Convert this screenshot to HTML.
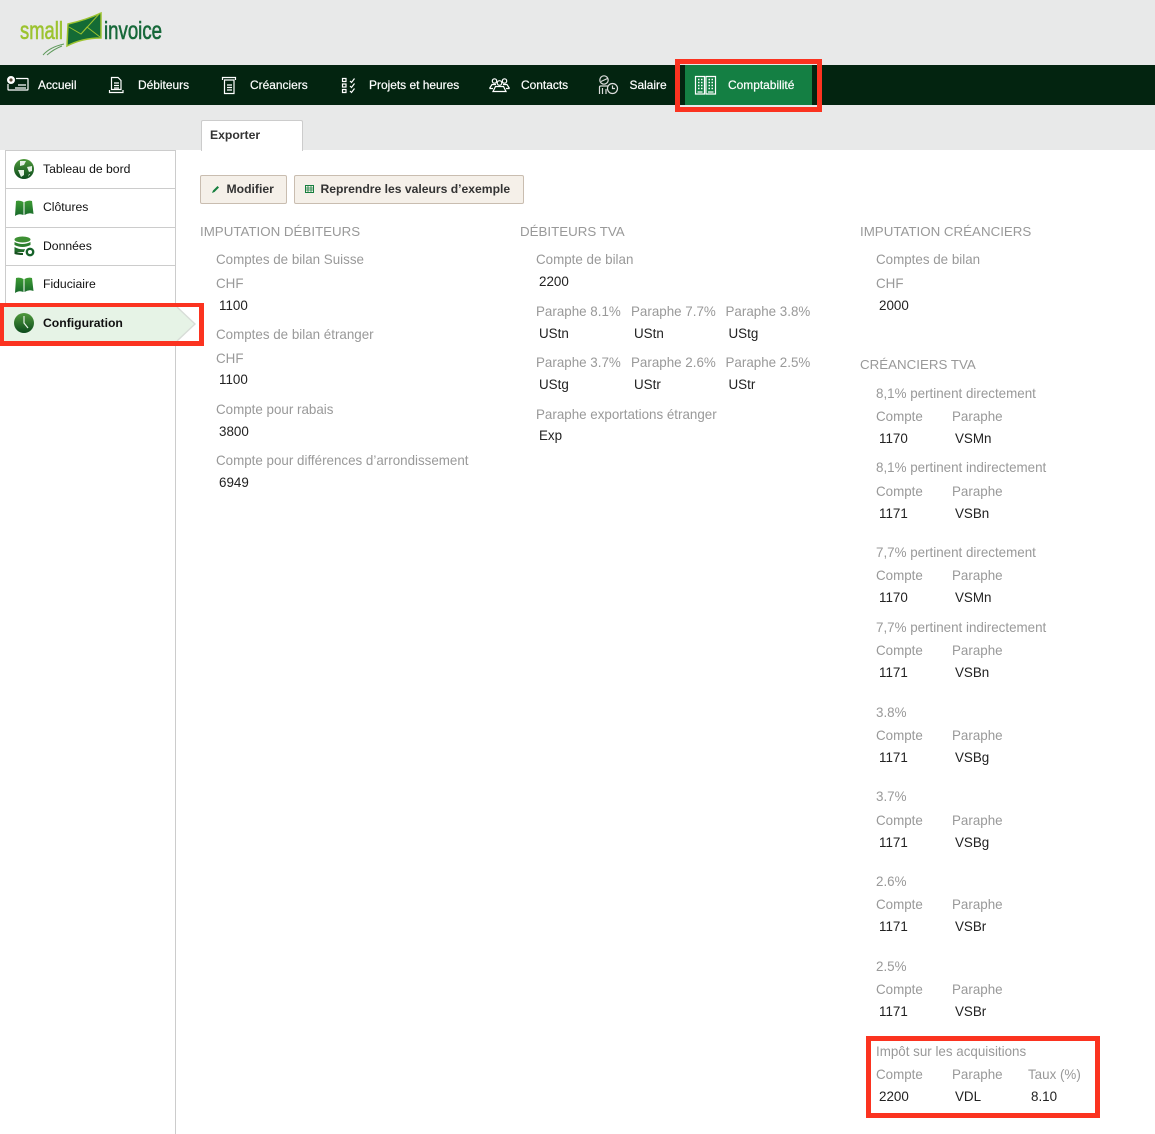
<!DOCTYPE html>
<html><head><meta charset="utf-8"><style>
html,body{margin:0;padding:0}
body{width:1155px;height:1134px;overflow:hidden;position:relative;background:#e8e9e9;font-family:"Liberation Sans",sans-serif}
.a{position:absolute}
.t{position:absolute;line-height:20px;white-space:nowrap}
.n{font-size:11.95px;color:#fff;top:75px;-webkit-text-stroke:.2px #fff}
.s{font-size:12.2px;color:#111;left:43px}
.h{font-size:13.33px;color:#999;margin-top:1px}
.l{font-size:13.38px;color:#999;margin-top:1px}
.v{font-size:13.4px;color:#222;margin-top:1px}
svg{position:absolute;overflow:visible}
.i{fill:none;stroke:#fff;stroke-width:1.2}
.d{position:absolute;left:5px;width:171px;height:1px;background:#ccc}
</style></head><body>

<svg style="left:0;top:0" width="180" height="62">
<text x="20" y="39" font-family="Liberation Sans" font-size="25" fill="#9cc32f" stroke="#9cc32f" stroke-width=".6" textLength="43" lengthAdjust="spacingAndGlyphs">small</text>
<text x="104" y="39" font-family="Liberation Sans" font-size="25" fill="#17693a" stroke="#17693a" stroke-width=".6" textLength="58" lengthAdjust="spacingAndGlyphs">invoice</text>
<path d="M68 24Q86 20 101 13L101 38Q82 38 67 46Z" fill="#146b35" stroke="#9cc32f" stroke-width="1.500"/>
<path d="M69 27L81 34L87 27L100 37M81 34L100 13" fill="none" stroke="#9cc32f" stroke-width="1"/>
<path d="M43 55Q50 47 64 44M47 55Q54 49 62 46" fill="none" stroke="#5f9a5c" stroke-width="1"/>
</svg>

<div class="a" style="left:0;top:65px;width:1155px;height:40px;background:#032410"></div>
<div class="a" style="left:685px;top:65px;width:127px;height:40px;background:#147f43"></div>

<svg style="left:0;top:65px" width="30" height="30" class="i"><path d="M16 13.500H27.500a.5.5 0 0 1 .5.5V24.500a.5.5 0 0 1-.5.5H8.500a.5.5 0 0 1-.5-.5V19M15 23H26M18 20H26"/><circle cx="11" cy="15" r="2.800" fill="#5a4a36" stroke="#fff" stroke-width="2.400"/></svg>
<svg style="left:109px;top:77px" width="15" height="18" class="i"><path d="M2.500 12.500V.5H9L12 3.500V12.500ZM5 6H10M5 8.500H10M5 11H10M.5 13V15.500H14V13"/></svg>
<svg style="left:222px;top:77px" width="15" height="18" class="i"><path d="M.5 3V.5H13.500V3M2.500 3H12V16.500H2.500ZM5 8H10M5 10.500H10M5 13H10"/></svg>
<svg style="left:342px;top:78px" width="14" height="15" class="i"><path d="M.5 .5H4V3.500H.5ZM.5 6H4V9H.5ZM.5 11.500H4V14.500H.5ZM8 3L9.500 4.500L12.500 .5M8 8L9.500 9.500L12.500 5.500M8 13L9.500 14.500L12.500 10.500"/></svg>
<svg style="left:489px;top:78px" width="21" height="14" class="i"><circle cx="5.500" cy="3" r="2.200"/><circle cx="15.500" cy="3" r="2.200"/><circle cx="10.500" cy="5" r="2.300"/><path d="M.5 10.500L3 6.500H7M20.500 10.500L18 6.500H14M4 13.500L6.500 8.500H14.500L17 13.500ZM.5 10.500H4M17 10.500H20.500"/></svg>
<svg style="left:598px;top:75px" width="21" height="20" class="i"><circle cx="6" cy="5" r="4.200" stroke="#ddd"/><path d="M3 6.500L9.500 3.500M1.500 19V12Q1.500 11 3 11H10M4.500 13V19M8 14V19" stroke="#ddd"/><circle cx="14.500" cy="13.500" r="5" stroke="#ddd"/><path d="M14.500 10.500V13.500H17" stroke="#ddd"/></svg>
<svg style="left:695px;top:76px" width="21" height="19" class="i"><path d="M.5 .5H9.500V18H.5ZM11 .5H20.500V18H11ZM2.500 16H7.500M13 16H18.500"/><path d="M3 3.500H4.500M6 3.500H7.500M3 6.500H4.500M6 6.500H7.500M3 9.500H4.500M6 9.500H7.500M3 12.500H4.500M6 12.500H7.500M13.500 3.500H15M16.500 3.500H18M13.500 6.500H15M16.500 6.500H18M13.500 9.500H15M16.500 9.500H18M13.500 12.500H15M16.500 12.500H18" stroke-width="1.400"/></svg>

<div class="t n" style="left:38px">Accueil</div>
<div class="t n" style="left:138px">Débiteurs</div>
<div class="t n" style="left:250px">Créanciers</div>
<div class="t n" style="left:369px">Projets et heures</div>
<div class="t n" style="left:521px">Contacts</div>
<div class="t n" style="left:629.500px">Salaire</div>
<div class="t n" style="left:728px">Comptabilité</div>
<div class="a" style="left:675px;top:59px;width:137px;height:43px;border:5px solid #fb3320"></div>

<div class="a" style="left:0;top:150px;width:1155px;height:984px;background:#fff"></div>
<div class="a" style="left:201px;top:120px;width:100px;height:30px;background:#fff;border:1px solid #ccc;border-bottom:0;border-radius:2px 2px 0 0"></div>
<div class="t" style="left:210px;top:125px;font-size:12.2px;font-weight:bold;color:#333">Exporter</div>

<div class="a" style="left:175px;top:150px;width:1px;height:984px;background:#ccc"></div>
<div class="a" style="left:5px;top:150px;width:1px;height:153px;background:#ccc"></div>
<div class="d" style="top:150px"></div><div class="d" style="top:188px"></div><div class="d" style="top:227px"></div><div class="d" style="top:265px"></div>

<svg style="left:0;top:303px" width="200" height="42"><path d="M4 2H175L195 21L175 40H4Z" fill="#e6f3e6"/><path d="M177 4L195 21L177 38" fill="none" stroke="#d8ddd8" stroke-width="1.400"/></svg>

<svg width="0" height="0" style="left:0;top:0"><defs>
<linearGradient id="g1" x1="0" y1="0" x2="0" y2="1"><stop offset="0" stop-color="#4f9a3c"/><stop offset="1" stop-color="#0b4a1c"/></linearGradient>
<linearGradient id="g2" x1="0" y1="0" x2="0" y2="1"><stop offset="0" stop-color="#3d9b34"/><stop offset="1" stop-color="#17682a"/></linearGradient>
</defs></svg>
<svg style="left:14px;top:159px" width="20" height="20"><circle cx="10" cy="10" r="10" fill="url(#g1)"/><path d="M6 2L12 2L10 6L6 7ZM13 8L18 7L18 12L15 13ZM4 11L10 11L10 16L7 18ZM15 15L16 15L14 18Z" fill="#e4f0e4"/></svg>
<svg style="left:14px;top:199px" width="20" height="17"><path d="M2 2Q6 1 9.500 3V16Q5 14 1 17ZM10.500 3Q14 1 18 2L19.500 15Q15 13 10.500 16Z" fill="url(#g2)"/></svg>
<svg style="left:14px;top:236px" width="21" height="21"><ellipse cx="8.500" cy="3.500" rx="8" ry="3" fill="#3d8f33"/><path d="M.5 6Q8.500 10 16.500 6V9Q8.500 13 .5 9Z" fill="#2c7f2e"/><path d="M.5 11Q6 14 11 13L10 16H.5Z" fill="#1f6a28"/><path d="M.5 15Q4 17 9 17V19Q4 19 .5 18Z" fill="#164f1e"/><circle cx="16" cy="16" r="3.200" fill="none" stroke="#16622a" stroke-width="2.400"/></svg>
<svg style="left:14px;top:276px" width="20" height="17"><path d="M2 2Q6 1 9.500 3V16Q5 14 1 17ZM10.500 3Q14 1 18 2L19.500 15Q15 13 10.500 16Z" fill="url(#g2)"/></svg>
<svg style="left:14px;top:313px" width="20" height="20"><circle cx="10" cy="10" r="10" fill="url(#g1)"/><path d="M10 3V10L14 15" fill="none" stroke="#e4f0e4" stroke-width="1.200"/></svg>

<div class="t s" style="top:159px">Tableau de bord</div>
<div class="t s" style="top:197px">Clôtures</div>
<div class="t s" style="top:236px">Données</div>
<div class="t s" style="top:274px">Fiduciaire</div>
<div class="t s" style="top:313px;font-weight:bold">Configuration</div>
<div class="a" style="left:0;top:303px;width:195px;height:34px;border:solid #fb3320;border-width:4px 5px 5px 4px"></div>

<div class="a" style="left:200px;top:175px;width:85px;height:27px;background:#f5f0e9;border:1px solid #c9bdb0;border-radius:2px"></div>
<div class="a" style="left:294px;top:175px;width:228px;height:27px;background:#f5f0e9;border:1px solid #c9bdb0;border-radius:2px"></div>
<svg style="left:211px;top:184px" width="10" height="10"><path d="M1 9L2 6.500L6.500 2L8 3.500L3.500 8Z" fill="#167f3f"/></svg>
<svg style="left:305px;top:185px" width="9" height="8"><rect x=".5" y=".5" width="8" height="7" fill="none" stroke="#167f3f"/><path d="M0 3H9M0 5H9M3 0V8M6 0V8" stroke="#167f3f" stroke-width=".8"/></svg>
<div class="t" style="left:226.500px;top:179px;font-size:12.2px;font-weight:bold;color:#333">Modifier</div>
<div class="t" style="left:320.500px;top:179px;font-size:12.150px;font-weight:bold;color:#333">Reprendre les valeurs d’exemple</div>

<div class="t h" style="left:200px;top:220.500px">IMPUTATION DÉBITEURS</div>
<div class="t l" style="left:216px;top:249px">Comptes de bilan Suisse</div>
<div class="t l" style="left:216px;top:273px">CHF</div>
<div class="t v" style="left:219px;top:295px">1100</div>
<div class="t l" style="left:216px;top:324px">Comptes de bilan étranger</div>
<div class="t l" style="left:216px;top:348px">CHF</div>
<div class="t v" style="left:219px;top:369px">1100</div>
<div class="t l" style="left:216px;top:399px">Compte pour rabais</div>
<div class="t v" style="left:219px;top:421px">3800</div>
<div class="t l" style="left:216px;top:450px">Compte pour différences d’arrondissement</div>
<div class="t v" style="left:219px;top:472px">6949</div>

<div class="t h" style="left:520px;top:220.500px">DÉBITEURS TVA</div>
<div class="t l" style="left:536px;top:249px">Compte de bilan</div>
<div class="t v" style="left:539px;top:271px">2200</div>
<div class="t l" style="left:536px;top:301px">Paraphe 8.1%</div>
<div class="t l" style="left:631px;top:301px">Paraphe 7.7%</div>
<div class="t l" style="left:725.500px;top:301px">Paraphe 3.8%</div>
<div class="t v" style="left:539px;top:323px">UStn</div>
<div class="t v" style="left:634px;top:323px">UStn</div>
<div class="t v" style="left:728.500px;top:323px">UStg</div>
<div class="t l" style="left:536px;top:352px">Paraphe 3.7%</div>
<div class="t l" style="left:631px;top:352px">Paraphe 2.6%</div>
<div class="t l" style="left:725.500px;top:352px">Paraphe 2.5%</div>
<div class="t v" style="left:539px;top:374px">UStg</div>
<div class="t v" style="left:634px;top:374px">UStr</div>
<div class="t v" style="left:728.500px;top:374px">UStr</div>
<div class="t l" style="left:536px;top:404px">Paraphe exportations étranger</div>
<div class="t v" style="left:539px;top:425px">Exp</div>

<div class="t h" style="left:860px;top:220.500px">IMPUTATION CRÉANCIERS</div>
<div class="t l" style="left:876px;top:249px">Comptes de bilan</div>
<div class="t l" style="left:876px;top:273px">CHF</div>
<div class="t v" style="left:879px;top:295px">2000</div>
<div class="t h" style="left:860px;top:353.500px">CRÉANCIERS TVA</div>

<div class="t l" style="left:876px;top:383px">8,1% pertinent directement</div>
<div class="t l" style="left:876px;top:406px">Compte</div><div class="t l" style="left:952px;top:406px">Paraphe</div>
<div class="t v" style="left:879px;top:428px">1170</div><div class="t v" style="left:955px;top:428px">VSMn</div>

<div class="t l" style="left:876px;top:457px">8,1% pertinent indirectement</div>
<div class="t l" style="left:876px;top:481px">Compte</div><div class="t l" style="left:952px;top:481px">Paraphe</div>
<div class="t v" style="left:879px;top:503px">1171</div><div class="t v" style="left:955px;top:503px">VSBn</div>

<div class="t l" style="left:876px;top:542px">7,7% pertinent directement</div>
<div class="t l" style="left:876px;top:565px">Compte</div><div class="t l" style="left:952px;top:565px">Paraphe</div>
<div class="t v" style="left:879px;top:587px">1170</div><div class="t v" style="left:955px;top:587px">VSMn</div>

<div class="t l" style="left:876px;top:617px">7,7% pertinent indirectement</div>
<div class="t l" style="left:876px;top:640px">Compte</div><div class="t l" style="left:952px;top:640px">Paraphe</div>
<div class="t v" style="left:879px;top:662px">1171</div><div class="t v" style="left:955px;top:662px">VSBn</div>

<div class="t l" style="left:876px;top:702px">3.8%</div>
<div class="t l" style="left:876px;top:725px">Compte</div><div class="t l" style="left:952px;top:725px">Paraphe</div>
<div class="t v" style="left:879px;top:747px">1171</div><div class="t v" style="left:955px;top:747px">VSBg</div>

<div class="t l" style="left:876px;top:786px">3.7%</div>
<div class="t l" style="left:876px;top:810px">Compte</div><div class="t l" style="left:952px;top:810px">Paraphe</div>
<div class="t v" style="left:879px;top:832px">1171</div><div class="t v" style="left:955px;top:832px">VSBg</div>

<div class="t l" style="left:876px;top:871px">2.6%</div>
<div class="t l" style="left:876px;top:894px">Compte</div><div class="t l" style="left:952px;top:894px">Paraphe</div>
<div class="t v" style="left:879px;top:916px">1171</div><div class="t v" style="left:955px;top:916px">VSBr</div>

<div class="t l" style="left:876px;top:956px">2.5%</div>
<div class="t l" style="left:876px;top:979px">Compte</div><div class="t l" style="left:952px;top:979px">Paraphe</div>
<div class="t v" style="left:879px;top:1001px">1171</div><div class="t v" style="left:955px;top:1001px">VSBr</div>

<div class="t l" style="left:876px;top:1041px">Impôt sur les acquisitions</div>
<div class="t l" style="left:876px;top:1064px">Compte</div><div class="t l" style="left:952px;top:1064px">Paraphe</div><div class="t l" style="left:1028px;top:1064px">Taux (%)</div>
<div class="t v" style="left:879px;top:1086px">2200</div><div class="t v" style="left:955px;top:1086px">VDL</div><div class="t v" style="left:1031px;top:1086px">8.10</div>
<div class="a" style="left:866px;top:1036px;width:224px;height:72px;border:5px solid #fb3320"></div>
</body></html>
